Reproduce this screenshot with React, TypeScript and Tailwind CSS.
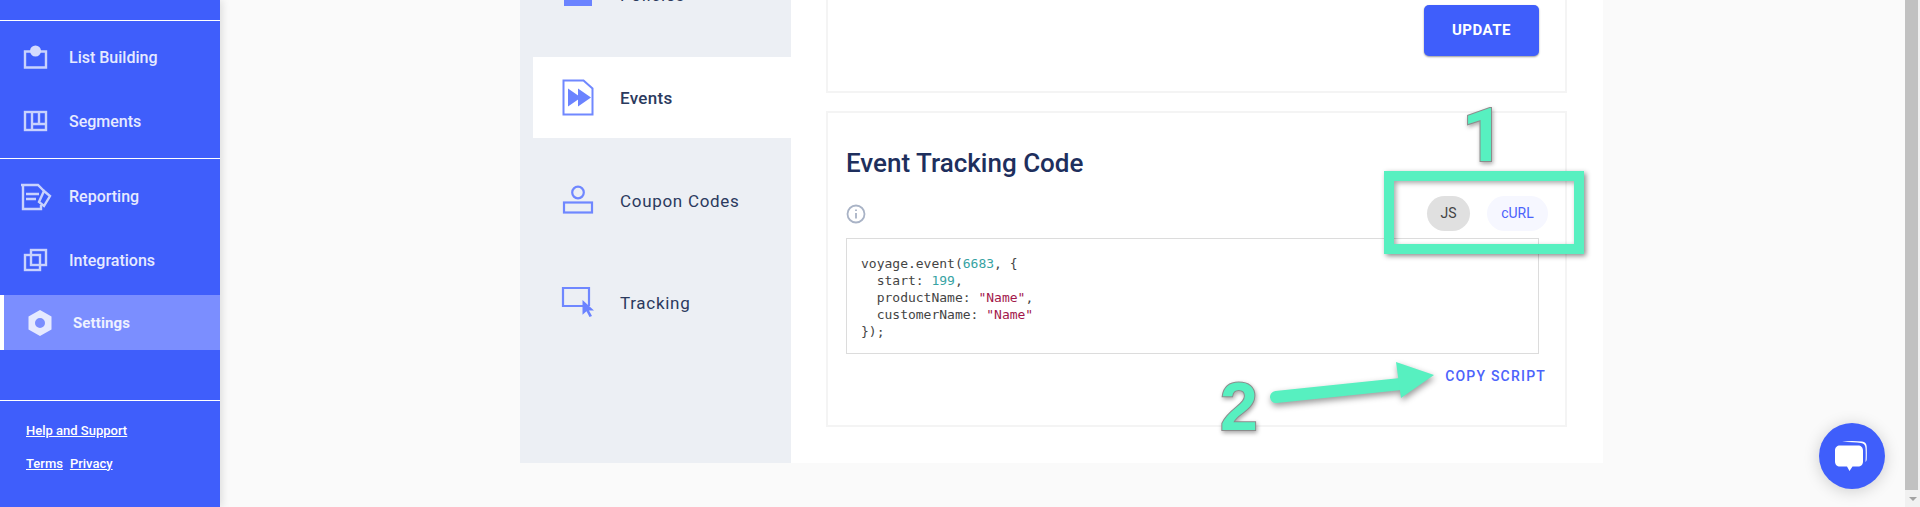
const roboto = "font-['Roboto',sans-serif]";

function ListIcon() {
  return (
    <svg width="26" height="26" viewBox="0 0 26 26" fill="none">
      <path d="M9 6.500H2v16h21v-16h-7" stroke="#c9d2fd" strokeWidth="2.400" />
      <circle cx="12.500" cy="6" r="5.500" fill="#d4dbfe" />
    </svg>
  );
}

function SegmentsIcon() {
  return (
    <svg width="26" height="26" viewBox="0 0 26 26" fill="none" stroke="#c9d2fd" strokeWidth="2.400">
      <rect x="2" y="3" width="21" height="18" />
      <path d="M9 3v18M9 15h14M16 3v12" />
    </svg>
  );
}

function ReportingIcon() {
  return (
    <svg width="32" height="28" viewBox="0 0 32 28" fill="none" stroke="#c9d2fd" strokeWidth="2.400">
      <path d="M1 2h17l6 6M3 2v24h18v-4" />
      <path d="M6 11h13M6 16h10" />
      <path d="M24 8l6 5-6 10-5-4z" />
    </svg>
  );
}

function IntegrationsIcon() {
  return (
    <svg width="26" height="26" viewBox="0 0 26 26" fill="none" stroke="#c9d2fd" strokeWidth="2.400">
      <rect x="2" y="7" width="15" height="15" />
      <rect x="8" y="2" width="15" height="15" />
    </svg>
  );
}

function HexIcon() {
  return (
    <svg width="24" height="26" viewBox="0 0 24 26">
      <path fillRule="evenodd" fill="#e6eaff" d="M12 0l11.500 6.500v13L12 26 .5 19.500v-13zM12 8a5 5 0 100 10 5 5 0 000-10z" />
    </svg>
  );
}

function EventsIcon() {
  return (
    <svg width="32" height="37" viewBox="0 0 32 37" fill="none">
      <path d="M1.500 1.500h20l9 8v26h-29z" stroke="#7088ff" strokeWidth="2" />
      <path d="M6 9.500l13 9-13 9zM16 9.500l13 9-13 9z" fill="#6b83ff" />
    </svg>
  );
}

function CouponIcon() {
  return (
    <svg width="32" height="30" viewBox="0 0 32 30" fill="none" stroke="#6f87ff" strokeWidth="2.200">
      <circle cx="16" cy="7.500" r="5.800" />
      <rect x="2" y="17.500" width="28" height="10" />
    </svg>
  );
}

function TrackingIcon() {
  return (
    <svg width="34" height="31" viewBox="0 0 34 31" fill="none">
      <path d="M28 20V2H2v18h20" stroke="#6f87ff" strokeWidth="2.200" />
      <path d="M21.500 14l11.500 10.500h-5l3 5.500-2.500 1-3-5.800-4 3.600z" fill="#6b83ff" />
    </svg>
  );
}

const navTop = [
  { label: "List Building", icon: <ListIcon /> },
  { label: "Segments", icon: <SegmentsIcon /> },
];
const navBottom = [
  { label: "Reporting", icon: <ReportingIcon /> },
  { label: "Integrations", icon: <IntegrationsIcon /> },
];

function NavRow({ label, icon }: { label: string; icon: React.ReactNode }) {
  return (
    <div className="flex h-[64px] items-center">
      <div className="flex w-[69px] justify-center pl-[2px]">{icon}</div>
      <span className="text-[16px] font-medium text-[#e6eaff]">{label}</span>
    </div>
  );
}

function Sidebar() {
  return (
    <aside className={`flex h-[507px] w-[220px] shrink-0 flex-col bg-[#3f5efb] shadow-[2px_0_8px_rgba(0,0,0,0.12)] ${roboto}`}>
      <div className="h-[21px] border-b border-white" />
      <div className="flex h-[138px] flex-col justify-center border-b border-white">
        {navTop.map((item) => (
          <NavRow key={item.label} {...item} />
        ))}
      </div>
      <div className="flex flex-col pt-[6px]">
        {navBottom.map((item) => (
          <NavRow key={item.label} {...item} />
        ))}
      </div>
      <div className="mt-[2px] flex h-[55px] items-center border-l-4 border-white bg-[#7b8eff]">
        <div className="flex w-[69px] justify-center pl-[2px]">
          <HexIcon />
        </div>
        <span className="pt-[2px] text-[15px] font-bold tracking-[0.1px] text-[#eef1ff]">Settings</span>
      </div>
      <div className="mt-[50px] flex flex-col gap-[13px] border-t border-white pl-[26px] pt-[20px] text-[13px] font-medium text-white underline">
        <a>Help and Support</a>
        <div className="flex gap-[7px]">
          <a>Terms</a>
          <a>Privacy</a>
        </div>
      </div>
    </aside>
  );
}

const tabs = [
  { label: "Events", icon: <EventsIcon />, active: true },
  { label: "Coupon Codes", icon: <CouponIcon />, active: false },
  { label: "Tracking", icon: <TrackingIcon />, active: false },
];

function SubNav() {
  return (
    <div className="flex h-[463px] w-[271px] shrink-0 flex-col items-end gap-[21px] overflow-hidden bg-[#eceff4] text-[#2b3a5e]">
      <div className="-mt-[45px] flex h-[81px] w-[258px] shrink-0 items-center">
        <div className="flex w-[87px] justify-center pl-[2px]">
          <div className="-mt-[12px] h-[32px] w-[28px] bg-[#6b83ff]" />
        </div>
        <span className="text-[17px] tracking-[0.7px]">Policies</span>
      </div>
      {tabs.map((tab) => (
        <div
          key={tab.label}
          className={`flex h-[81px] w-[258px] shrink-0 items-center ${tab.active ? "bg-white" : ""}`}
        >
          <div className="flex w-[87px] justify-center pl-[2px]">{tab.icon}</div>
          <span className={`text-[17px] ${tab.active ? "pt-[2px] font-medium tracking-[0.3px]" : "pt-[4px] tracking-[0.7px]"}`}>
            {tab.label}
          </span>
        </div>
      ))}
    </div>
  );
}

function CodeBlock() {
  return (
    <pre className="h-[116px] border border-[#dcdcdc] px-[14px] pt-[16px] font-['DejaVu_Sans_Mono',monospace] text-[13px] leading-[17px] text-[#444]">
      {"voyage.event("}
      <span className="text-[#36a3a3]">6683</span>
      {", {\n  start: "}
      <span className="text-[#36a3a3]">199</span>
      {",\n  productName: "}
      <span className="text-[#a3174a]">"Name"</span>
      {",\n  customerName: "}
      <span className="text-[#a3174a]">"Name"</span>
      {"\n});"}
    </pre>
  );
}

function Cards() {
  return (
    <div className="flex w-[741px] flex-col gap-[18px] pl-[35px] box-content">
      <div className="flex h-[93px] justify-end border-x-2 border-b-2 border-[#f4f4f4] pr-[26px] pt-[5px]">
        <button className="h-[51px] w-[115px] rounded-[5px] bg-[#3f5efb] text-[15px] font-bold tracking-[0.5px] text-white shadow-[0_1px_2px_rgba(0,0,0,0.4)]">
          UPDATE
        </button>
      </div>
      <div className="flex h-[316px] flex-col border-2 border-[#f4f4f4] pl-[18px] pr-[26px]">
        <h2 className="mt-[34px] text-[26px] font-medium leading-[32px] text-[#1e2f5d]">Event Tracking Code</h2>
        <div className="mt-[17px] flex h-[35px] items-center justify-between">
          <svg width="20" height="20" viewBox="0 0 20 20" fill="none">
            <circle cx="10" cy="10" r="8.500" stroke="#a9b3c6" strokeWidth="1.800" />
            <path d="M10 9v5.500M10 5.500v1.600" stroke="#a9b3c6" strokeWidth="1.800" />
          </svg>
          <div className="-mr-[9px] flex gap-[17px] text-[14px]">
            <span className="flex h-[35px] w-[43px] items-center justify-center rounded-full bg-[#e0e0e0] text-[#444]">JS</span>
            <span className="flex h-[35px] w-[61px] items-center justify-center rounded-full bg-[#f6f7ff] text-[#4c63fb]">cURL</span>
          </div>
        </div>
        <div className="mt-[7px]">
          <CodeBlock />
        </div>
        <div className="-mr-[7px] mt-[13px] self-end text-[14px] font-medium leading-[18px] tracking-[1.2px] text-[#4c63fb]">
          COPY SCRIPT
        </div>
      </div>
    </div>
  );
}

function Annotations() {
  return (
    <>
      <div className="absolute left-[1384px] top-[171px] h-[83px] w-[200px] border-[10px] border-[#57f0c0] shadow-[2px_2px_5px_rgba(0,0,0,0.45),inset_2px_2px_5px_rgba(0,0,0,0.35)]" />
      <span className="absolute left-[1462px] top-[93px] font-['Roboto',sans-serif] text-[74px] font-bold leading-[85px] text-[#57f0c0] [-webkit-text-stroke:2px_#8c8c8c] [paint-order:stroke_fill] [filter:drop-shadow(1px_2px_2px_rgba(0,0,0,0.35))]">
        1
      </span>
      <span className="absolute left-[1220px] top-[364px] font-['Liberation_Sans',sans-serif] text-[68px] font-bold leading-[85px] text-[#57f0c0] [-webkit-text-stroke:2px_#8c8c8c] [paint-order:stroke_fill] [filter:drop-shadow(1px_2px_2px_rgba(0,0,0,0.35))]">
        2
      </span>
      <svg width="170" height="50" viewBox="0 0 170 50" className="absolute left-[1268px] top-[360px] [filter:drop-shadow(1px_3px_3px_rgba(0,0,0,0.4))]">
        <path d="M8 37l125-13" stroke="#57f0c0" strokeWidth="12" strokeLinecap="round" />
        <path d="M128 2l38 13-33 23z" fill="#57f0c0" />
      </svg>
    </>
  );
}

function Scrollbar() {
  return (
    <div className="flex h-[507px] w-[15px] shrink-0 flex-col bg-[#f1f1f1]">
      <div className="h-[490px] w-[13px] bg-[#c1c1c1]" />
      <div className="flex flex-1 items-center justify-center">
        <div className="h-0 w-0 border-x-[4px] border-t-[4px] border-x-transparent border-t-[#a3a3a3]" />
      </div>
    </div>
  );
}

export default function App() {
  return (
    <div className={`relative flex h-[507px] w-[1920px] overflow-hidden bg-[#fafafa] ${roboto}`}>
      <Sidebar />
      <main className="flex-1">
        <div className="ml-[300px] flex h-[463px] w-[1083px] overflow-hidden bg-white">
          <SubNav />
          <Cards />
        </div>
      </main>
      <Scrollbar />
      <Annotations />
      <button className="absolute left-[1819px] top-[423px] flex h-[66px] w-[66px] items-center justify-center rounded-full bg-[#3f5efb] shadow-[0_2px_16px_rgba(0,0,0,0.18)]">
        <svg width="36" height="34" viewBox="0 0 36 34">
          <path d="M8 2.500c6-.8 14-.8 20 0 3 .4 4.500 2 4.700 5 .2 4 .2 9 0 13-.1 1.200-.5 2-1.200 2.500.3-5 .3-10 0-14-.2-3-1.600-4.600-4.500-5-5-.7-11-.8-19-1.500z" fill="#fff" />
          <path d="M6 6.500h18c3 0 5 2 5 5v11c0 3-2 5-5 5h-5.500L15.500 32 13 27.500H6c-3 0-5-2-5-5v-11c0-3 2-5 5-5z" fill="#fff" />
        </svg>
      </button>
    </div>
  );
}
